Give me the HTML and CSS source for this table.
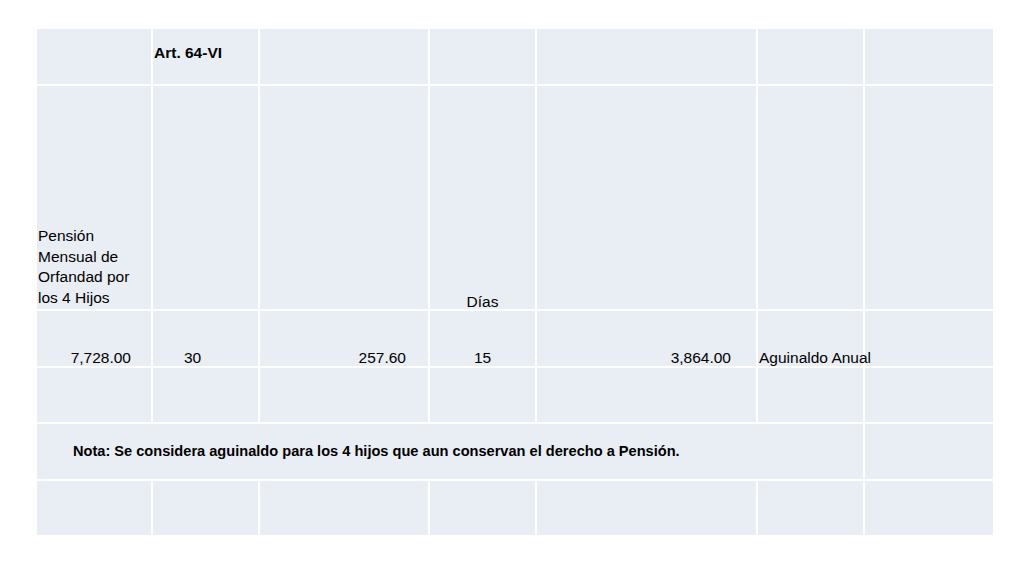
FILE: index.html
```html
<!DOCTYPE html>
<html lang="es">
<head>
<meta charset="utf-8">
<title>Aguinaldo</title>
<link rel="stylesheet" href="styles.css">
</head>
<body>
<main class="page">
  <table class="sheet">
    <colgroup>
      <col class="c1"><col class="c2"><col class="c3"><col class="c4"><col class="c5"><col class="c6"><col class="c7">
    </colgroup>
    <tr class="r-head">
      <td></td>
      <td class="bold art">Art. 64-VI</td>
      <td></td><td></td><td></td><td></td><td></td>
    </tr>
    <tr class="r-tall">
      <td class="label">Pensión<br>Mensual de<br>Orfandad por<br>los 4 Hijos</td>
      <td></td><td></td>
      <td class="center single">Días</td>
      <td></td><td></td><td></td>
    </tr>
    <tr class="r-std r-values">
      <td class="num n1">7,728.00</td>
      <td class="n2">30</td>
      <td class="num n3">257.60</td>
      <td class="center">15</td>
      <td class="num n5">3,864.00</td>
      <td class="nowrap">Aguinaldo Anual</td>
      <td></td>
    </tr>
    <tr class="r-std">
      <td></td><td></td><td></td><td></td><td></td><td></td><td></td>
    </tr>
    <tr class="r-std">
      <td colspan="6" class="bold note">Nota: Se considera aguinaldo para los 4 hijos que aun conservan el derecho a Pensión.</td>
      <td></td>
    </tr>
    <tr class="r-std">
      <td></td><td></td><td></td><td></td><td></td><td></td><td></td>
    </tr>
  </table>
</main>
</body>
</html>
```

FILE: styles.css
```css
html, body {
  margin: 0;
  padding: 0;
  background: #ffffff;
}

.page {
  padding: 27px 0 0 35px;
}

.sheet {
  border-collapse: collapse;
  table-layout: fixed;
  width: 960px;
  font-family: "Liberation Sans", Arial, sans-serif;
  font-size: 15.5px;
  color: #000;
}

.sheet td {
  background: #e9edf4;
  border: 2px solid #ffffff;
  padding: 0 1px;
  vertical-align: bottom;
  line-height: 20.7px;
  overflow: visible;
}

.c1 { width: 116px; }
.c2 { width: 107px; }
.c3 { width: 170px; }
.c4 { width: 107px; }
.c5 { width: 221px; }
.c6 { width: 107px; }
.c7 { width: 130px; }

.r-head { height: 57px; }
.r-tall { height: 225px; }
.r-std { height: 56.5px; }

.sheet .r-head td { vertical-align: middle; padding-bottom: 6px; }

.sheet .r-tall td.label { line-height: 20.8px; }
.sheet .r-tall td.single { line-height: 15px; }

.sheet .r-values td { padding-bottom: 0; line-height: 17px; }

.bold { font-weight: bold; }

.sheet td.center { text-align: center; }

.sheet td.num { text-align: right; }
.sheet td.n1 { padding-right: 20px; }
.sheet td.n3 { padding-right: 22px; }
.sheet td.n5 { padding-right: 25px; }
.sheet td.n2 { padding-left: 31px; }

.nowrap { white-space: nowrap; }

.sheet td.note {
  vertical-align: middle;
  padding-left: 36px;
  padding-bottom: 0;
  white-space: nowrap;
  font-size: 14.6px;
}
```
